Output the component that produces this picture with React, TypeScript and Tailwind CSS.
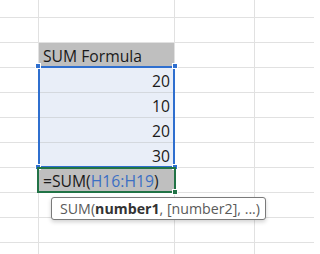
const ROWS = [
  { h: "h-[18px]" },
  { h: "h-[25px]" },
  { h: "h-[25px]", label: "SUM Formula", kind: "header" },
  { h: "h-[25px]", value: "20", kind: "sel" },
  { h: "h-[25px]", value: "10", kind: "sel" },
  { h: "h-[25px]", value: "20", kind: "sel" },
  { h: "h-[25px]", value: "30", kind: "sel" },
  { h: "h-[25px]", kind: "formula" },
  { h: "h-[25px]" },
  { h: "h-[25px]" },
  { h: "h-[25px]" },
];

function Handle({ className }: { className: string }) {
  return <div className={`absolute h-[6px] w-[6px] border border-white bg-[#2f6fcf] ${className}`} />;
}

export default function App() {
  return (
    <div
      className="relative h-[254px] w-[314px] overflow-hidden bg-white text-[15.7px] text-[#1a1a1a]"
      style={{ fontFamily: '"Open Sans", "Noto Sans", sans-serif' }}
    >
      {ROWS.map((row, i) => (
        <div key={i} className={`flex ${row.h}`}>
          <div className="w-[39px] shrink-0 border-r border-b border-[#e1e1e1]" />
          <div
            className={`flex w-[136px] shrink-0 items-center border-r border-b px-[4px] leading-none ${
              row.kind === "header"
                ? "border-[#e1e1e1] bg-[#bfbfbf]"
                : row.kind === "sel"
                ? "justify-end border-[#d4d8de] bg-[#e9eef8]"
                : row.kind === "formula"
                ? "border-[#e1e1e1] bg-[#bfbfbf]"
                : "border-[#e1e1e1]"
            }`}
          >
            {row.label && <span className="pt-[3px]">{row.label}</span>}
            {row.value && <span className="pt-[3px]">{row.value}</span>}
            {row.kind === "formula" && (
              <span className="pt-[3px]">
                =SUM(<span className="text-[#3c6fc4]">H16:H19</span>)
              </span>
            )}
          </div>
          <div className="w-[80px] shrink-0 border-r border-b border-[#e1e1e1]" />
          <div className="flex-1 border-b border-[#e1e1e1]" />
        </div>
      ))}

      {/* range reference border */}
      <div className="absolute left-[38px] top-[66px] h-[102px] w-[137px] border-2 border-[#2f6fcf]" />
      <Handle className="left-[35px] top-[63px]" />
      <Handle className="left-[172px] top-[63px]" />
      <Handle className="left-[35px] top-[164px]" />
      <Handle className="left-[172px] top-[164px]" />

      {/* active cell */}
      <div className="absolute left-[37px] top-[167px] h-[26px] w-[139px] border-2 border-[#217346]" />
      <div className="absolute left-[172px] top-[189px] h-[6px] w-[6px] border border-white bg-[#217346]" />

      {/* function tooltip */}
      <div className="absolute left-[51px] top-[197px] flex h-[23px] w-[215px] items-center rounded-[3px] border border-[#7a7a7a] bg-white px-[8px] text-[14.2px] text-[#5a5a5a] shadow-[0_2px_4px_rgba(0,0,0,0.18)]">
        <span className="whitespace-nowrap">
          SUM(<span className="font-bold text-[#333]">number1</span>, [number2], ...)
        </span>
      </div>
    </div>
  );
}
